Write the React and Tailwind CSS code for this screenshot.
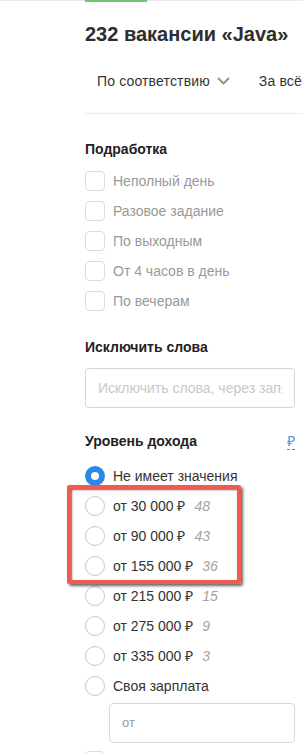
import React from "react";

const parttime = ["Неполный день", "Разовое задание", "По выходным", "От 4 часов в день", "По вечерам"];
const incomes = [
  ["от 30 000 ₽", "48"],
  ["от 90 000 ₽", "43"],
  ["от 155 000 ₽", "36"],
  ["от 215 000 ₽", "15"],
  ["от 275 000 ₽", "9"],
  ["от 335 000 ₽", "3"],
];

function Checkbox() {
  return <span className="block w-[20px] h-[20px] rounded-[4px] border border-[#dcdcdc] bg-white shrink-0" />;
}

function Radio({ checked }) {
  return checked ? (
    <span className="block w-[20px] h-[20px] rounded-full border-[6px] border-[#2b88e4] bg-white shrink-0" />
  ) : (
    <span className="block w-[20px] h-[20px] rounded-full border border-[#c8c8c8] bg-white shrink-0" />
  );
}

export default function App() {
  return (
    <div className="relative w-[303px] h-[753px] overflow-hidden bg-white text-[#333] font-['Liberation_Sans',Arial,sans-serif]">
      <div className="h-[3px] border-t border-[#ebebeb]">
        <div className="ml-[85px] -mt-px w-[62px] h-[2px] bg-[#6ec46f]" />
      </div>

      <div className="pl-[85px]">
        <div className="mt-[20px] text-[20px] leading-[23px] font-bold whitespace-nowrap text-[#2e2e2e]">
          232 вакансии «Java»
        </div>

        <div className="mt-[25px] h-[20px] flex items-center pl-[12px] text-[14px] leading-[20px] whitespace-nowrap text-[#333] tracking-[0.15px]">
          <span>По соответствию</span>
          <svg className="ml-[7px] w-[13px] h-[8px] shrink-0" viewBox="0 0 13 8">
            <polyline points="1,1 6.5,6.5 12,1" fill="none" stroke="#8f8f8f" strokeWidth="1.8" />
          </svg>
          <span className="ml-[29px]">За всё время</span>
        </div>

        <div className="mt-[22px] border-b border-[#ebebeb] w-[400px]" />

        <div className="w-[210px]">
          <div className="mt-[25px] text-[14px] leading-[20px] font-bold text-[#222]">Подработка</div>
          <div className="mt-[7px] flex flex-col">
            {parttime.map((t) => (
              <div key={t} className="h-[30px] flex items-center gap-[8px] text-[14px] leading-[20px] text-[#999]">
                <Checkbox />
                <span className="whitespace-nowrap">{t}</span>
              </div>
            ))}
          </div>

          <div className="mt-[21px] text-[14px] leading-[20px] font-bold text-[#222]">Исключить слова</div>
          <div className="mt-[11px] h-[40px] rounded-[4px] border border-[#d4d4d4] flex items-center pl-[12px] pr-[12px]">
            <span className="block overflow-hidden whitespace-nowrap text-[14px] text-[#c8c8c8]">Исключить слова, через запятую</span>
          </div>

          <div className="mt-[23px] flex items-center justify-between">
            <span className="text-[14px] leading-[20px] font-bold text-[#222]">Уровень дохода</span>
            <span className="text-[14px] leading-[16px] text-[#3d93ea] border-b border-dashed border-[#3d93ea]">₽</span>
          </div>

          <div className="mt-[10px] flex flex-col">
            <div className="h-[30px] flex items-center gap-[8px] text-[14px] leading-[20px] text-[#333]">
              <Radio checked />
              <span className="whitespace-nowrap">Не имеет значения</span>
            </div>
            {incomes.map(([t, c]) => (
              <div key={t} className="h-[30px] flex items-center gap-[8px] text-[14px] leading-[20px] text-[#333]">
                <Radio />
                <span className="whitespace-nowrap">{t}</span>
                <span className="italic text-[#a3a3a3] ml-[1px]">{c}</span>
              </div>
            ))}
            <div className="h-[30px] flex items-center gap-[8px] text-[14px] leading-[20px] text-[#333]">
              <Radio />
              <span className="whitespace-nowrap">Своя зарплата</span>
            </div>
          </div>

          <div className="mt-[2px] ml-[24px] h-[40px] rounded-[4px] border border-[#d9d9d9] flex items-center pl-[12px]">
            <span className="text-[13px] text-[#999]">от</span>
          </div>

          <div className="mt-[8px]">
            <Checkbox />
          </div>
        </div>
      </div>

      <div className="absolute left-[67px] top-[485px] w-[174px] h-[99px] border-[4px] border-[#f15a51] rounded-[2px] shadow-[2px_2px_3px_rgba(0,0,0,0.6),inset_1px_1px_2px_rgba(0,0,0,0.6)]" />
    </div>
  );
}
